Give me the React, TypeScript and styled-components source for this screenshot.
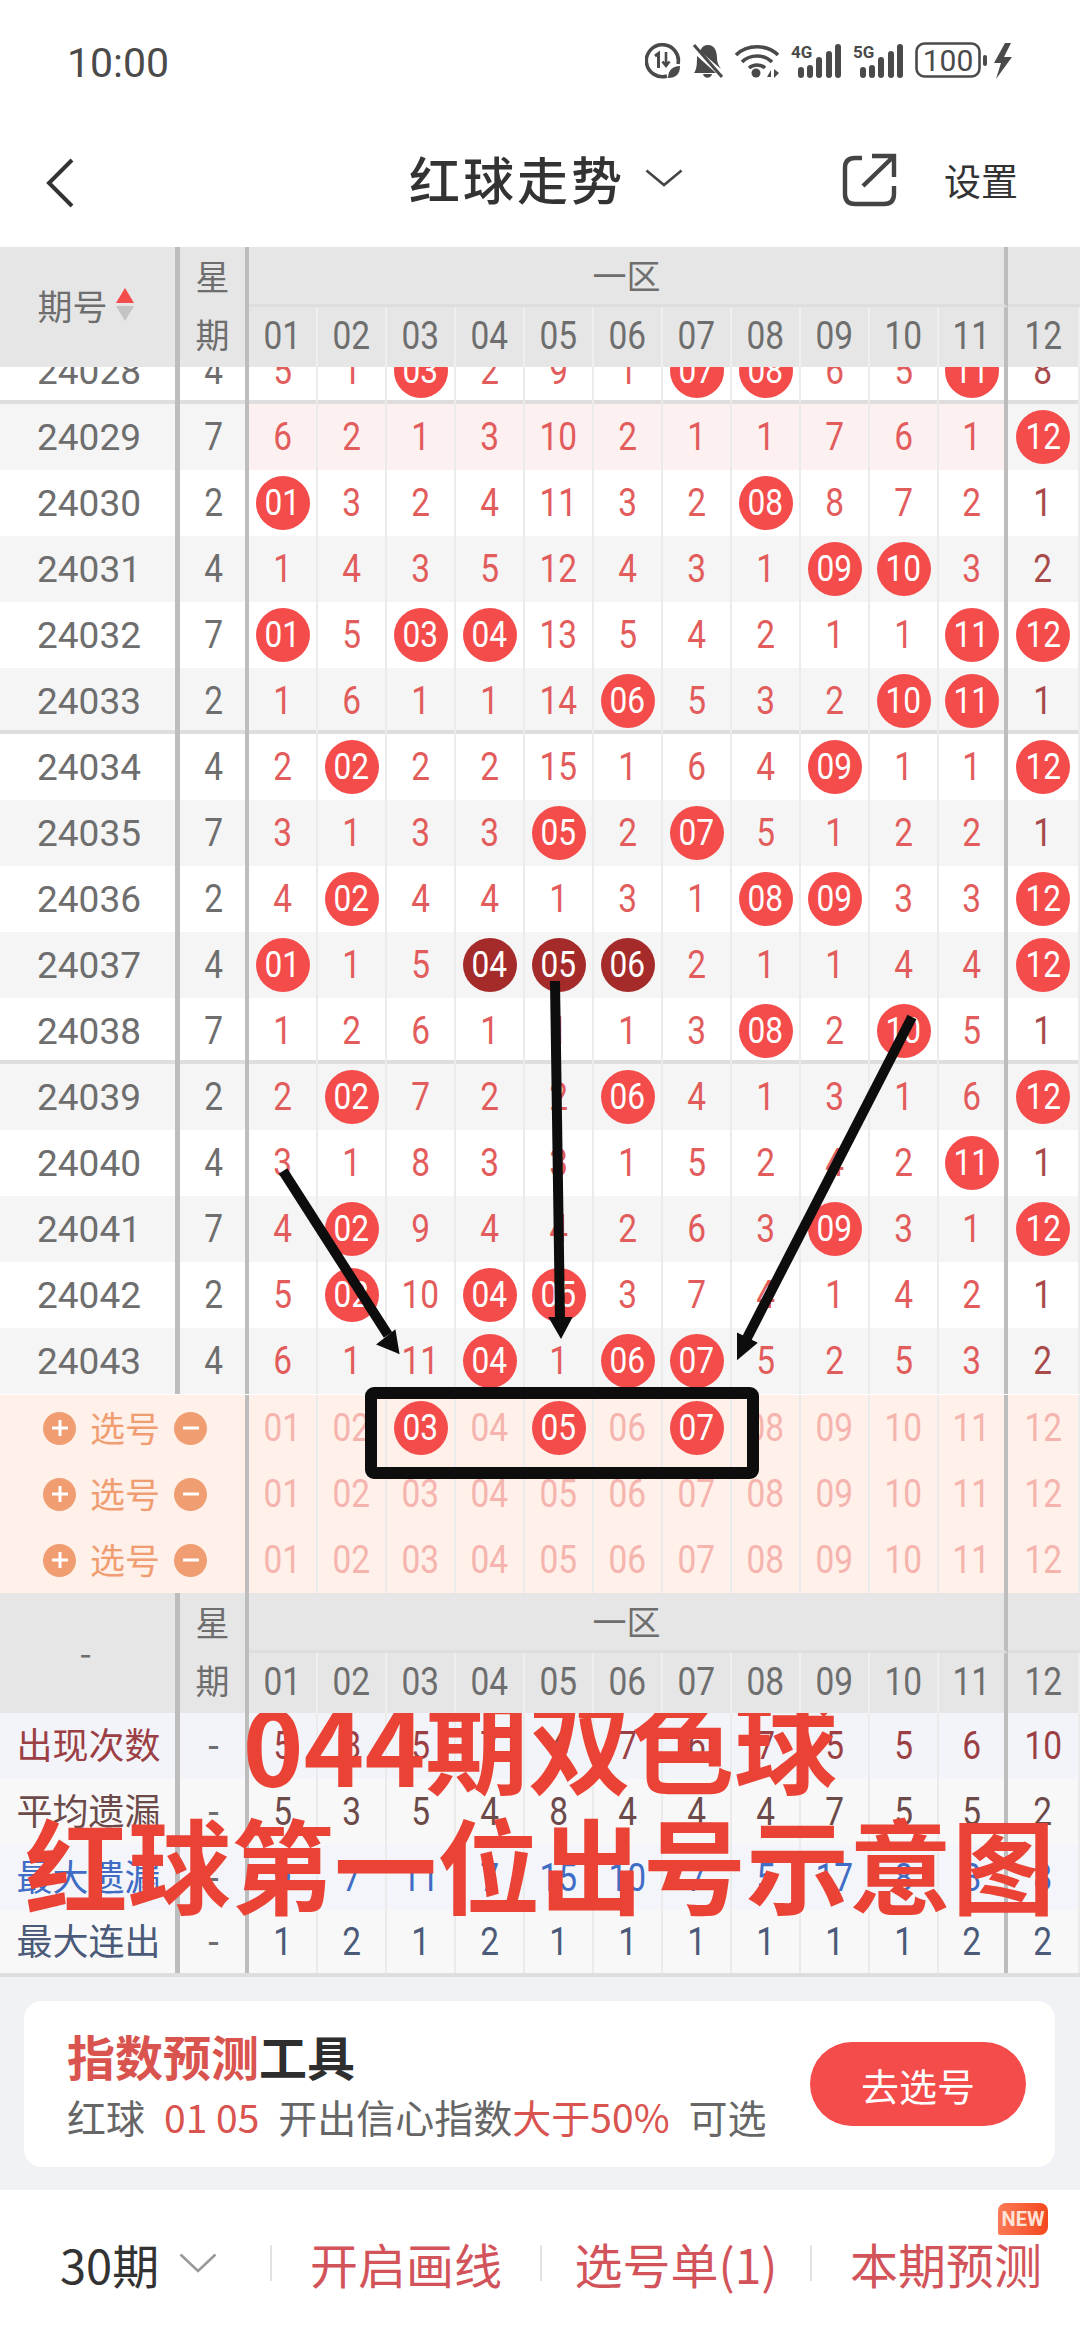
import React from "react";
import styled, { createGlobalStyle } from "styled-components";

const CJK = `"Noto Sans CJK SC", "Noto Sans", sans-serif`;
const DIGITS = `Roboto, "Noto Sans CJK SC", sans-serif`;
const DIVIDER = "#bdbdbd";
const RED = "#f44b4b";

type Ball = { v: string; dark?: boolean };
type Cell = number | Ball;
const b = (v: string): Ball => ({ v });
const d = (v: string): Ball => ({ v, dark: true });

const ROWS: { id: string; week: number; cells: Cell[]; pink?: boolean }[] = [
  { id: "24028", week: 4, cells: [5, 1, b("03"), 2, 9, 1, b("07"), b("08"), 6, 5, b("11"), 8] },
  { id: "24029", week: 7, pink: true, cells: [6, 2, 1, 3, 10, 2, 1, 1, 7, 6, 1, b("12")] },
  { id: "24030", week: 2, cells: [b("01"), 3, 2, 4, 11, 3, 2, b("08"), 8, 7, 2, 1] },
  { id: "24031", week: 4, cells: [1, 4, 3, 5, 12, 4, 3, 1, b("09"), b("10"), 3, 2] },
  { id: "24032", week: 7, cells: [b("01"), 5, b("03"), b("04"), 13, 5, 4, 2, 1, 1, b("11"), b("12")] },
  { id: "24033", week: 2, cells: [1, 6, 1, 1, 14, b("06"), 5, 3, 2, b("10"), b("11"), 1] },
  { id: "24034", week: 4, cells: [2, b("02"), 2, 2, 15, 1, 6, 4, b("09"), 1, 1, b("12")] },
  { id: "24035", week: 7, cells: [3, 1, 3, 3, b("05"), 2, b("07"), 5, 1, 2, 2, 1] },
  { id: "24036", week: 2, cells: [4, b("02"), 4, 4, 1, 3, 1, b("08"), b("09"), 3, 3, b("12")] },
  { id: "24037", week: 4, cells: [b("01"), 1, 5, d("04"), d("05"), d("06"), 2, 1, 1, 4, 4, b("12")] },
  { id: "24038", week: 7, cells: [1, 2, 6, 1, 1, 1, 3, b("08"), 2, b("10"), 5, 1] },
  { id: "24039", week: 2, cells: [2, b("02"), 7, 2, 2, b("06"), 4, 1, 3, 1, 6, b("12")] },
  { id: "24040", week: 4, cells: [3, 1, 8, 3, 3, 1, 5, 2, 4, 2, b("11"), 1] },
  { id: "24041", week: 7, cells: [4, b("02"), 9, 4, 4, 2, 6, 3, b("09"), 3, 1, b("12")] },
  { id: "24042", week: 2, cells: [5, b("02"), 10, b("04"), b("05"), 3, 7, 4, 1, 4, 2, 1] },
  { id: "24043", week: 4, cells: [6, 1, 11, b("04"), 1, b("06"), b("07"), 5, 2, 5, 3, 2] },
];

const COLUMNS = ["01", "02", "03", "04", "05", "06", "07", "08", "09", "10", "11", "12"];

const STATS = [
  { label: "出现次数", color: "#9b3f45", bg: "#f3f4f9", h: 66, values: [5, 8, 5, 7, 4, 7, 6, 7, 5, 5, 6, 10] },
  { label: "平均遗漏", color: "#6d4a4a", bg: "#f8f8f8", h: 66, values: [5, 3, 5, 4, 8, 4, 4, 4, 7, 5, 5, 2] },
  { label: "最大遗漏", color: "#3f6cc4", bg: "#f4f5fa", h: 65, values: [9, 7, 11, 7, 15, 10, 7, 5, 17, 8, 8, 8] },
  { label: "最大连出", color: "#4b5a78", bg: "#f8f8f8", h: 67, values: [1, 2, 1, 2, 1, 1, 1, 1, 1, 1, 2, 2] },
];

const GlobalStyle = createGlobalStyle`
  html, body {
    margin: 0;
    padding: 0;
    background: #fff;
  }
  * {
    box-sizing: border-box;
  }
`;

const Page = styled.div`
  position: relative;
  width: 1080px;
  height: 2340px;
  overflow: hidden;
  background: #fff;
  font-family: ${CJK};
`;

const StatusBar = styled.div`
  height: 120px;
  padding: 43px 67px 0 67px;
  display: flex;
  justify-content: space-between;
  align-items: flex-start;
`;

const Clock = styled.span`
  font-family: ${DIGITS};
  font-size: 41px;
  line-height: 40px;
  color: #4a4a4a;
`;

const StatusIcons = styled.div`
  display: flex;
  align-items: center;
  height: 36px;
  gap: 11px;
  color: #4a4a4a;
`;

const NavBar = styled.div`
  height: 127px;
  padding: 0 62px 0 46px;
  display: flex;
  align-items: flex-start;
  justify-content: space-between;
`;

const NavTitle = styled.div`
  display: flex;
  align-items: center;
  gap: 20px;
  margin-left: 176px;
  height: 116px;
  font-size: 51px;
  font-weight: 500;
  letter-spacing: 3px;
  color: #333;
`;

const NavActions = styled.div`
  display: flex;
  align-items: center;
  gap: 46px;
  height: 120px;
  font-size: 37px;
  color: #333;
`;

const BackIcon = styled.svg`
  margin-top: 38px;
`;

const gridCols = "180px 69px repeat(11, 69px) 72px";

const HeadGrid = styled.div`
  display: grid;
  grid-template-columns: ${gridCols};
  grid-template-rows: 60px 60px;
  height: 120px;
  background: #e6e6e6;
  color: #6e6e6e;
  position: relative;
  z-index: 1;
`;

const HeadIssue = styled.div`
  grid-row: 1 / span 2;
  border-right: 5px solid ${DIVIDER};
  display: flex;
  align-items: center;
  justify-content: center;
  gap: 8px;
  padding: 0 4px 6px 0;
  font-size: 35px;
`;

const HeadWeek = styled.div`
  grid-row: 1 / span 2;
  border-right: 4px solid ${DIVIDER};
  display: flex;
  flex-direction: column;
  align-items: center;
  justify-content: space-around;
  padding-bottom: 4px;
  font-size: 34px;
  line-height: 58px;
`;

const HeadZone = styled.div`
  grid-column: 3 / span 11;
  border-right: 4px solid ${DIVIDER};
  border-bottom: 3px solid #dedede;
  display: flex;
  align-items: center;
  justify-content: center;
  padding-bottom: 2px;
  font-size: 34px;
`;

const HeadExtra = styled.div`
  border-bottom: 3px solid #dedede;
`;

const HeadNum = styled.div<{ $edge?: boolean }>`
  border-right: ${(p) => (p.$edge ? `4px solid ${DIVIDER}` : "2px solid #efefef")};
  display: flex;
  align-items: center;
  justify-content: center;
  padding-bottom: 2px;
  font-family: ${DIGITS};
  font-size: 38px;
`;

const SortMark = styled.span`
  display: flex;
  flex-direction: column;
  gap: 3px;
`;

const SortUp = styled.span`
  width: 0;
  height: 0;
  border-left: 9px solid transparent;
  border-right: 9px solid transparent;
  border-bottom: 15px solid ${RED};
`;

const SortDown = styled.span`
  width: 0;
  height: 0;
  border-left: 9px solid transparent;
  border-right: 9px solid transparent;
  border-top: 15px solid #c4c4c4;
`;

const Viewport = styled.div`
  height: 1028px;
  overflow: hidden;
`;

const Rows = styled.div`
  margin-top: -29px;
`;

const Row = styled.div<{ $gray: boolean; $rule: boolean }>`
  display: grid;
  grid-template-columns: ${gridCols};
  height: 66px;
  background: ${(p) => (p.$gray ? "#f5f5f5" : "#fff")};
  box-shadow: ${(p) => (p.$rule ? "inset 0 -4px 0 #dedede" : "none")};
`;

const IssueCell = styled.div`
  border-right: 5px solid ${DIVIDER};
  display: flex;
  align-items: center;
  justify-content: center;
  padding-left: 3px;
  font-family: ${DIGITS};
  font-size: 37px;
  color: #6e6e6e;
`;

const WeekCell = styled.div`
  border-right: 4px solid ${DIVIDER};
  display: flex;
  align-items: center;
  justify-content: center;
  padding-left: 2px;
  font-family: ${DIGITS};
  font-size: 38px;
  color: #6e6e6e;
`;

const NumCell = styled.div<{ $edge?: boolean; $pink?: boolean; $color?: string }>`
  border-right: ${(p) => (p.$edge ? `4px solid ${DIVIDER}` : "2px solid #ebebeb")};
  background: ${(p) => (p.$pink ? "#fdf0f0" : "transparent")};
  color: ${(p) => p.$color || "#e25c5c"};
  display: flex;
  align-items: center;
  justify-content: center;
  font-family: ${DIGITS};
  font-size: 38px;
`;

const Digits = styled.span`
  display: inline-block;
  transform: scaleX(0.88);
`;

const BallMark = styled.span<{ $dark?: boolean }>`
  width: 54px;
  height: 54px;
  border-radius: 50%;
  background: ${(p) => (p.$dark ? "#a52a2a" : RED)};
  color: #fff;
  display: flex;
  align-items: center;
  justify-content: center;
  font-family: ${DIGITS};
  font-size: 36px;
`;

const PickRow = styled.div`
  display: grid;
  grid-template-columns: ${gridCols};
  height: 66px;
  background: #fff0e9;
`;

const PickLabel = styled.div`
  grid-column: 1 / span 2;
  border-right: 4px solid ${DIVIDER};
  padding: 0 0 4px 43px;
  display: flex;
  align-items: center;
  gap: 14px;
  font-size: 35px;
  color: #f09d72;
`;

const RoundBtn = styled.span`
  width: 33px;
  height: 33px;
  margin-top: 4px;
  border-radius: 50%;
  background: #f09d72;
  color: #fff;
  display: flex;
  align-items: center;
  justify-content: center;
`;

const StatRow = styled.div<{ $bg: string; $h: number; $last?: boolean }>`
  display: grid;
  grid-template-columns: ${gridCols};
  height: ${(p) => p.$h}px;
  background: ${(p) => p.$bg};
  border-bottom: ${(p) => (p.$last ? "4px solid #dedede" : "none")};
`;

const StatLabel = styled.div<{ $color: string }>`
  border-right: 5px solid ${DIVIDER};
  display: flex;
  align-items: center;
  justify-content: center;
  padding: 0 0 6px 2px;
  font-size: 36px;
  color: ${(p) => p.$color};
`;

const ToolArea = styled.div`
  height: 213px;
  padding: 24px 25px 23px 24px;
  background: #f1f2f6;
`;

const ToolCard = styled.div`
  height: 166px;
  padding: 0 29px 0 43px;
  background: #fff;
  border-radius: 18px;
  display: flex;
  align-items: center;
  justify-content: space-between;
`;

const ToolText = styled.div`
  display: flex;
  flex-direction: column;
  gap: 8px;
`;

const ToolTitle = styled.div`
  font-size: 48px;
  line-height: 56px;
  font-weight: 700;
  color: #2e2e2e;
`;

const ToolLine = styled.div`
  display: flex;
  align-items: center;
  gap: 19px;
  font-size: 39px;
  line-height: 50px;
  color: #666;
`;

const RedText = styled.span`
  color: #d9534f;
`;

const GoButton = styled.div`
  width: 216px;
  height: 84px;
  border-radius: 42px;
  background: ${RED};
  color: #fff;
  display: flex;
  align-items: center;
  justify-content: center;
  font-size: 38px;
`;

const BottomBar = styled.div`
  height: 150px;
  padding: 0 0 4px 60px;
  display: grid;
  grid-template-columns: 210px 270px 270px 1fr;
  align-items: center;
`;

const PeriodCell = styled.div`
  display: flex;
  align-items: center;
  gap: 20px;
  font-size: 47px;
  color: #333;
`;

const ActionCell = styled.div`
  position: relative;
  height: 36px;
  border-left: 2px solid #e2e2e2;
  display: flex;
  align-items: center;
  justify-content: center;
  font-size: 48px;
  color: #d2545a;
  white-space: nowrap;
`;

const NewBadge = styled.span`
  position: absolute;
  top: -42px;
  right: 32px;
  width: 50px;
  height: 32px;
  border-radius: 8px 8px 8px 2px;
  background: linear-gradient(90deg, #fb7a55, #f4481f);
  color: #fde2d6;
  display: flex;
  align-items: center;
  justify-content: center;
  font-family: ${DIGITS};
  font-size: 20px;
  font-weight: 700;
`;

const Annotations = styled.svg`
  position: absolute;
  left: 0;
  top: 0;
  pointer-events: none;
`;

const Headline = styled.div`
  position: absolute;
  left: 0;
  width: 1080px;
  color: #ea4335;
  font-size: 103px;
  font-weight: 700;
  line-height: 110px;
  white-space: nowrap;
  text-align: center;
`;

const HeadlineTop = styled(Headline)`
  top: 1688px;
`;

const HeadlineBottom = styled(Headline)`
  top: 1808px;
`;

const Chevron = ({ w, h, color }: { w: number; h: number; color: string }) => (
  <svg width={w} height={h} viewBox={`0 0 ${w} ${h}`} fill="none">
    <path d={`M1.5 1.5 L${w / 2} ${h - 2} L${w - 1.5} 1.5`} stroke={color} strokeWidth="2.6" />
  </svg>
);

const DataIcon = () => (
  <svg width="36" height="36" viewBox="0 0 36 36" fill="none">
    <path d="M22 33 A16 16 0 1 1 33 21" stroke="#4a4a4a" strokeWidth="3.6" />
    <path d="M10 13 L13.5 10.5 V25" stroke="#4a4a4a" strokeWidth="3" />
    <path d="M21 9 V22 M17.5 18.5 L21 23 L24.5 18.5" stroke="#4a4a4a" strokeWidth="2.6" />
    <path d="M23 35 C23 27 28 23 35 23 C35 31 31 35 23 35 Z" fill="#4a4a4a" />
  </svg>
);

const BellOffIcon = () => (
  <svg width="31" height="36" viewBox="0 0 31 36">
    <path
      d="M8 8 C10 4 12 2 16 2 C23 2 25 9 25 15 C25 20 27 23 29 26 L8 8 Z M5 13 L24 30 H2 C5 26 5 20 5 13 Z M11 31 H20 C19 36 12 36 11 31 Z"
      fill="#4a4a4a"
    />
    <path d="M2 2 L30 34" stroke="#4a4a4a" strokeWidth="3" />
  </svg>
);

const WifiIcon = () => (
  <svg width="46" height="36" viewBox="0 0 46 36" fill="none">
    <path d="M2 12 C13 1 33 1 44 12" stroke="#4a4a4a" strokeWidth="3.6" />
    <path d="M8 19 C16 11 30 11 38 19" stroke="#4a4a4a" strokeWidth="3.6" />
    <path d="M15 25 C19 21 27 21 31 25" stroke="#4a4a4a" strokeWidth="3.4" />
    <circle cx="22" cy="30" r="4.5" fill="#4a4a4a" />
    <path d="M33 34 L37 27 V34 Z M40 26 V35 L45 30 Z" fill="#4a4a4a" />
  </svg>
);

const SignalIcon = ({ label }: { label: string }) => (
  <svg width="51" height="36" viewBox="0 0 51 36">
    <text x="0" y="15" fontFamily="Roboto, sans-serif" fontWeight="700" fontSize="17" fill="#4a4a4a">
      {label}
    </text>
    <rect x="7" y="24" width="6" height="11" rx="3" fill="#4a4a4a" />
    <rect x="16" y="22" width="6" height="13" rx="3" fill="#4a4a4a" />
    <rect x="25" y="14" width="6" height="21" rx="3" fill="#4a4a4a" />
    <rect x="35" y="8" width="6" height="27" rx="3" fill="#4a4a4a" />
    <rect x="44" y="1" width="6" height="34" rx="3" fill="#4a4a4a" />
  </svg>
);

const BatteryIcon = () => (
  <svg width="98" height="38" viewBox="0 0 98 38" fill="none">
    <rect x="1.5" y="1.5" width="63" height="33" rx="8" stroke="#4a4a4a" strokeWidth="2.6" />
    <text x="33" y="29" textAnchor="middle" fontFamily="Roboto, sans-serif" fontSize="30" fill="#4a4a4a">
      100
    </text>
    <rect x="68" y="13" width="4" height="11" rx="2" fill="#4a4a4a" />
    <path d="M90 1 L79 21 H86 L81 37 L97 15 H89 L96 1 Z" fill="#4a4a4a" />
  </svg>
);

const ShareIcon = () => (
  <svg width="56" height="54" viewBox="0 0 56 54" fill="none">
    <path
      d="M20 5 H13 Q3 5 3 15 V41 Q3 51 13 51 H42 Q52 51 52 41 V33"
      stroke="#444"
      strokeWidth="4.4"
    />
    <path d="M21 33 L51 4 M30 3 H52 V24" stroke="#444" strokeWidth="4.4" />
  </svg>
);

const TableHead = ({ children }: { children: React.ReactNode }) => (
  <HeadGrid>
    <HeadIssue>{children}</HeadIssue>
    <HeadWeek>
      <span>星</span>
      <span>期</span>
    </HeadWeek>
    <HeadZone>一区</HeadZone>
    <HeadExtra />
    {COLUMNS.map((c, i) => (
      <HeadNum key={c} $edge={i === 10}>
        <Digits>{c}</Digits>
      </HeadNum>
    ))}
  </HeadGrid>
);

const Pick = ({ selected = [] }: { selected?: string[] }) => (
  <PickRow>
    <PickLabel>
      <RoundBtn>
        <svg width="20" height="20" viewBox="0 0 20 20">
          <path d="M10 2 V18 M2 10 H18" stroke="#fff" strokeWidth="3" />
        </svg>
      </RoundBtn>
      选号
      <RoundBtn>
        <svg width="20" height="20" viewBox="0 0 20 20">
          <path d="M2 10 H18" stroke="#fff" strokeWidth="3" />
        </svg>
      </RoundBtn>
    </PickLabel>
    {COLUMNS.map((c, i) => (
      <NumCell key={c} $edge={i === 10} $color="#f5b4ae">
        {selected.includes(c) ? (
          <BallMark>
            <Digits>{c}</Digits>
          </BallMark>
        ) : (
          <Digits>{c}</Digits>
        )}
      </NumCell>
    ))}
  </PickRow>
);

export default function App() {
  return (
    <Page>
      <GlobalStyle />
      <StatusBar>
        <Clock>10:00</Clock>
        <StatusIcons>
          <DataIcon />
          <BellOffIcon />
          <WifiIcon />
          <SignalIcon label="4G" />
          <SignalIcon label="5G" />
          <BatteryIcon />
        </StatusIcons>
      </StatusBar>

      <NavBar>
        <BackIcon width="28" height="50" viewBox="0 0 28 50" fill="none">
          <path d="M26 2 L3 25 L26 48" stroke="#333" strokeWidth="4" />
        </BackIcon>
        <NavTitle>
          红球走势
          <Chevron w={38} h={18} color="#444" />
        </NavTitle>
        <NavActions>
          <ShareIcon />
          设置
        </NavActions>
      </NavBar>

      <TableHead>
        期号
        <SortMark>
          <SortUp />
          <SortDown />
        </SortMark>
      </TableHead>

      <Viewport>
        <Rows>
          {ROWS.map((row, r) => (
            <Row key={row.id} $gray={r % 2 === 1} $rule={r % 5 === 0 && r !== 15}>
              <IssueCell>{row.id}</IssueCell>
              <WeekCell>
                <Digits>{row.week}</Digits>
              </WeekCell>
              {row.cells.map((cell, i) => (
                <NumCell
                  key={i}
                  $edge={i === 10}
                  $pink={row.pink && i < 11}
                  $color={i === 11 ? "#a84a4a" : undefined}
                >
                  {typeof cell === "number" ? (
                    <Digits>{cell}</Digits>
                  ) : (
                    <BallMark $dark={cell.dark}>
                      <Digits>{cell.v}</Digits>
                    </BallMark>
                  )}
                </NumCell>
              ))}
            </Row>
          ))}
        </Rows>
      </Viewport>

      <Pick selected={["03", "05", "07"]} />
      <Pick />
      <Pick />

      <TableHead>-</TableHead>

      {STATS.map((stat, s) => (
        <StatRow key={stat.label} $bg={stat.bg} $h={stat.h} $last={s === STATS.length - 1}>
          <StatLabel $color={stat.color}>{stat.label}</StatLabel>
          <WeekCell>-</WeekCell>
          {stat.values.map((v, i) => (
            <NumCell key={i} $edge={i === 10} $color={stat.color}>
              <Digits>{v}</Digits>
            </NumCell>
          ))}
        </StatRow>
      ))}

      <ToolArea>
        <ToolCard>
          <ToolText>
            <ToolTitle>
              <RedText>指数预测</RedText>工具
            </ToolTitle>
            <ToolLine>
              <span>红球</span>
              <RedText>01 05</RedText>
              <span>
                开出信心指数<RedText>大于50%</RedText>
              </span>
              <span>可选</span>
            </ToolLine>
          </ToolText>
          <GoButton>去选号</GoButton>
        </ToolCard>
      </ToolArea>

      <BottomBar>
        <PeriodCell>
          30期
          <Chevron w={38} h={20} color="#999" />
        </PeriodCell>
        <ActionCell>开启画线</ActionCell>
        <ActionCell>选号单(1)</ActionCell>
        <ActionCell>
          本期预测
          <NewBadge>NEW</NewBadge>
        </ActionCell>
      </BottomBar>

      <Annotations width="1080" height="2340" viewBox="0 0 1080 2340" fill="none">
        <rect x="371" y="1393" width="382" height="80" rx="3" stroke="#0d0d0d" strokeWidth="12" />
        <path d="M283 1171 L388 1335" stroke="#0d0d0d" strokeWidth="10" />
        <path d="M397 1351 L380 1344 L394 1333 Z" fill="#0d0d0d" stroke="#0d0d0d" strokeWidth="4" />
        <path d="M555 981 L560 1320" stroke="#0d0d0d" strokeWidth="10" />
        <path d="M561 1337 L550 1318 L571 1318 Z" fill="#0d0d0d" stroke="#0d0d0d" strokeWidth="2" />
        <path d="M912 1017 L746 1340" stroke="#0d0d0d" strokeWidth="10" />
        <path d="M738 1358 L738 1334 L756 1343 Z" fill="#0d0d0d" stroke="#0d0d0d" strokeWidth="2" />
      </Annotations>
      <HeadlineTop>044期双色球</HeadlineTop>
      <HeadlineBottom>红球第一位出号示意图</HeadlineBottom>
    </Page>
  );
}
